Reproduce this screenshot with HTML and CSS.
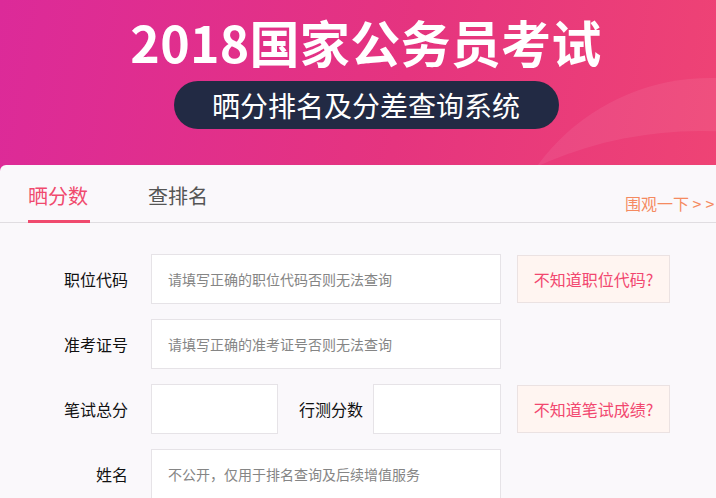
FILE: index.html
```html
<!DOCTYPE html>
<html lang="zh-CN">
<head>
<meta charset="utf-8">
<title>2018国家公务员考试 晒分排名及分差查询系统</title>
<link rel="stylesheet" href="styles.css">
</head>
<body>
<div class="page">
  <header class="banner">
    <svg class="deco" width="732" height="175" viewBox="0 0 732 175" aria-hidden="true">
      <defs>
        <mask id="ring">
          <rect x="0" y="0" width="732" height="175" fill="#000"/>
          <circle cx="710" cy="292" r="214" fill="#fff"/>
          <circle cx="700" cy="524" r="393" fill="#000"/>
        </mask>
      </defs>
      <rect x="0" y="0" width="732" height="175" fill="#fff" fill-opacity="0.07" mask="url(#ring)"/>
    </svg>
    <h1 class="title">2018国家公务员考试</h1>
    <div class="pill">晒分排名及分差查询系统</div>
  </header>

  <main class="card">
    <nav class="tabs">
      <a class="tab active">晒分数</a>
      <a class="tab">查排名</a>
      <a class="more">围观一下 <span class="arrows">&gt;</span>&gt;</a>
    </nav>

    <form class="form">
      <div class="row">
        <label class="label">职位代码</label>
        <div class="field wide"><span class="ph">请填写正确的职位代码否则无法查询</span></div>
        <a class="hint">不知道职位代码?</a>
      </div>
      <div class="row">
        <label class="label">准考证号</label>
        <div class="field wide"><span class="ph">请填写正确的准考证号否则无法查询</span></div>
      </div>
      <div class="row">
        <label class="label">笔试总分</label>
        <div class="field small"></div>
        <label class="label inner">行测分数</label>
        <div class="field small last"></div>
        <a class="hint">不知道笔试成绩?</a>
      </div>
      <div class="row">
        <label class="label">姓名</label>
        <div class="field wide"><span class="ph">不公开，仅用于排名查询及后续增值服务</span></div>
      </div>
    </form>
  </main>
</div>
</body>
</html>
```

FILE: styles.css
```css
html, body {
  margin: 0;
  padding: 0;
}

body {
  width: 716px;
  height: 498px;
  overflow: hidden;
  background: #faf8fb;
  font-family: "Noto Sans CJK SC", "Noto Sans", sans-serif;
}

.page {
  width: 732px;
}

.banner {
  position: relative;
  height: 175px;
  background: linear-gradient(100deg, #dc2a99 0%, #e5347f 55%, #ef4474 100%);
  display: flex;
  flex-direction: column;
  align-items: center;
  overflow: hidden;
}

.deco {
  position: absolute;
  left: 0;
  top: 0;
}

.title {
  position: relative;
  margin: 11px 0 0;
  font-size: 50px;
  line-height: 60px;
  font-weight: 700;
  color: #fff;
  letter-spacing: 0.3px;
}

.pill {
  position: relative;
  margin-top: 10px;
  width: 385px;
  height: 48px;
  border-radius: 24px;
  background: #222a44;
  color: #fff;
  font-size: 28px;
  line-height: 48px;
  text-align: center;
}

.card {
  position: relative;
  z-index: 1;
  margin-top: -10px;
  background: #faf8fb;
  border-radius: 6px 6px 0 0;
  padding-top: 17px;
}

.tabs {
  display: flex;
  align-items: flex-start;
  padding-left: 28px;
  border-bottom: 1px solid #e0dde1;
  white-space: nowrap;
}

.tab {
  display: block;
  width: 62px;
  font-size: 20px;
  line-height: 28px;
  padding-bottom: 10px;
  border-bottom: 3px solid transparent;
  margin-bottom: -1px;
  color: #555;
}

.tab + .tab {
  margin-left: 58px;
}

.tab.active {
  color: #f04a6e;
  border-bottom-color: #f04a6e;
}

.more {
  display: block;
  margin-left: 415px;
  margin-top: 10px;
  font-size: 16px;
  line-height: 22px;
  color: #f58a60;
}

.arrows {
  letter-spacing: 4px;
}

.form {
  margin: 31px 0 0;
  display: flex;
  flex-direction: column;
  gap: 15px;
}

.row {
  display: flex;
  align-items: center;
  height: 50px;
}

.label {
  width: 128px;
  margin-right: 23px;
  text-align: right;
  font-size: 16px;
  color: #111;
  flex: none;
}

.label.inner {
  width: 64px;
  margin: 0 10px 0 21px;
}

.field {
  box-sizing: border-box;
  height: 50px;
  border: 1px solid #e6e3e7;
  background: #fff;
  display: flex;
  align-items: center;
  padding-left: 16px;
  flex: none;
}

.field.wide {
  width: 350px;
}

.field.small {
  width: 127px;
}

.field.small.last {
  width: 128px;
}

.ph {
  font-size: 14px;
  color: #858585;
}

.hint {
  box-sizing: border-box;
  margin-left: 16px;
  width: 153px;
  height: 48px;
  border: 1px solid #ebe2e2;
  background: #fff5f1;
  color: #f2476f;
  font-size: 16px;
  line-height: 46px;
  text-align: center;
  flex: none;
}
```
